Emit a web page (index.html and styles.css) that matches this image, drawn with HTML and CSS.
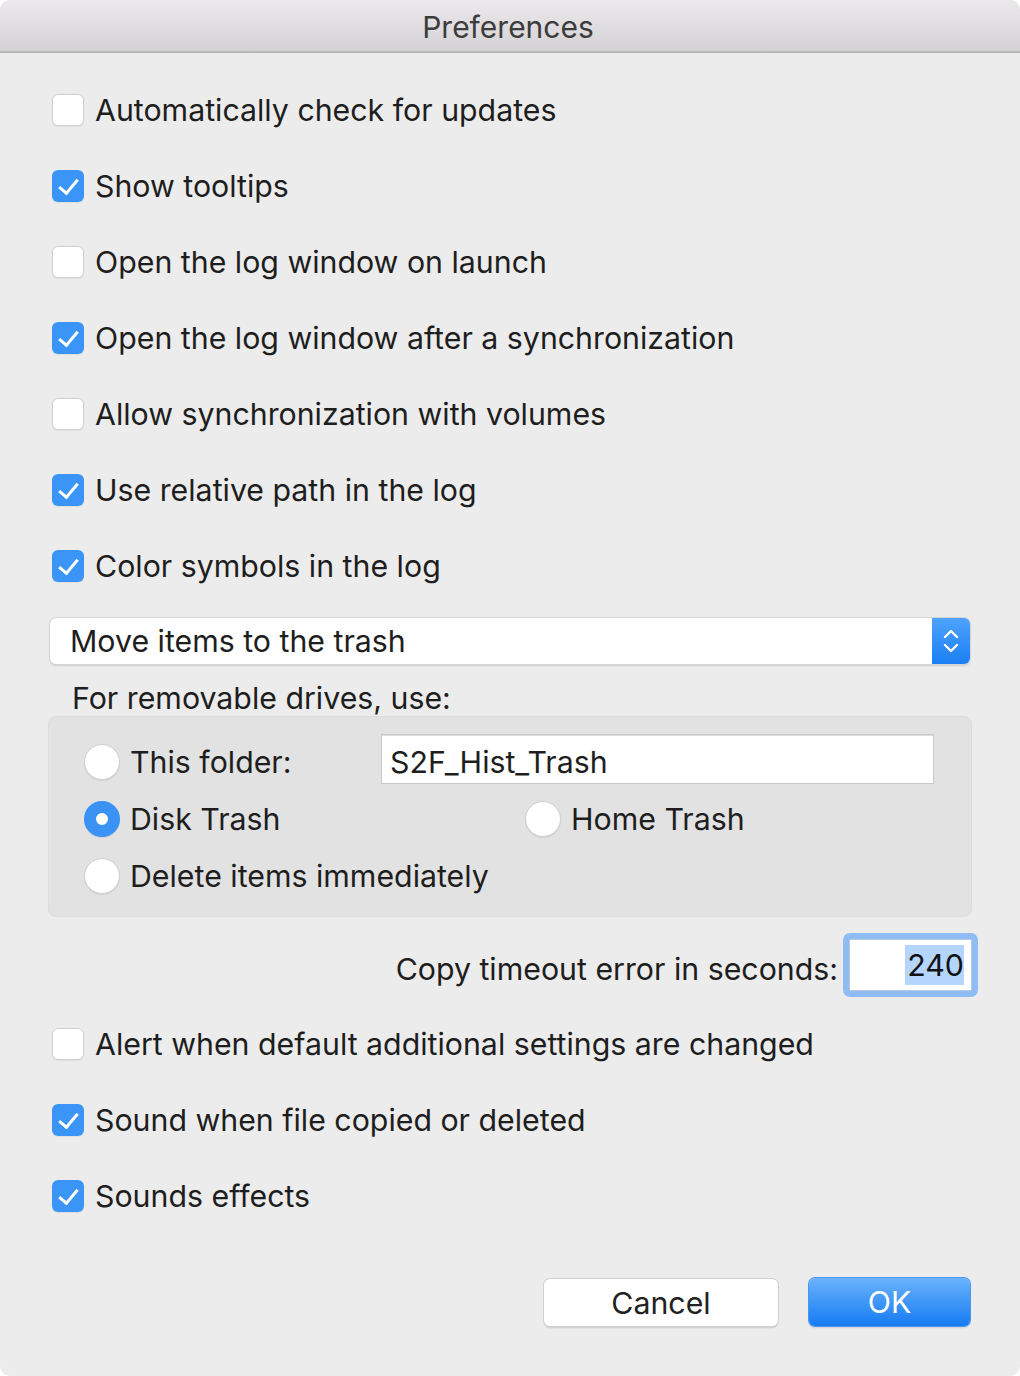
FILE: index.html
```html
<!DOCTYPE html>
<html lang="en">

<head>
    <meta charset="UTF-8">
    <title>Preferences</title>
    <link rel="stylesheet" href="styles.css">
</head>

<body>
    <div class="window">
        <div class="titlebar">Preferences</div>

        <div class="content">
            <div class="check-row"><span class="box"></span>Automatically check for updates</div>
            <div class="check-row"><span class="box on"></span>Show tooltips</div>
            <div class="check-row"><span class="box"></span>Open the log window on launch</div>
            <div class="check-row"><span class="box on"></span>Open the log window after a synchronization</div>
            <div class="check-row"><span class="box"></span>Allow synchronization with volumes</div>
            <div class="check-row"><span class="box on"></span>Use relative path in the log</div>
            <div class="check-row"><span class="box on"></span>Color symbols in the log</div>

            <div class="popup">
                <span class="popup-text">Move items to the trash</span>
                <span class="stepper">
                    <svg width="20" height="30" viewBox="0 0 20 30">
                        <path d="M4 11 L10 5 L16 11 M4 19 L10 25 L16 19" fill="none" stroke="#fff" stroke-width="2.4" stroke-linecap="round" stroke-linejoin="round"/>
                    </svg>
                </span>
            </div>

            <div class="group-label">For removable drives, use:</div>
            <div class="group">
                <div class="radio-row">
                    <div class="radio-item folder"><span class="radio"></span>This folder:</div>
                    <div class="field">S2F_Hist_Trash</div>
                </div>
                <div class="radio-row">
                    <div class="radio-item wide"><span class="radio on"></span>Disk Trash</div>
                    <div class="radio-item"><span class="radio"></span>Home Trash</div>
                </div>
                <div class="radio-row">
                    <div class="radio-item"><span class="radio"></span>Delete items immediately</div>
                </div>
            </div>

            <div class="timeout-row">
                <span class="timeout-label">Copy timeout error in seconds:</span>
                <div class="focus-ring">
                    <div class="num-field"><span class="sel">240</span></div>
                </div>
            </div>

            <div class="lower">
                <div class="check-row"><span class="box"></span>Alert when default additional settings are changed</div>
                <div class="check-row"><span class="box on"></span>Sound when file copied or deleted</div>
                <div class="check-row"><span class="box on"></span>Sounds effects</div>
            </div>

            <div class="buttons">
                <button class="btn">Cancel</button>
                <button class="btn primary">OK</button>
            </div>
        </div>
    </div>
</body>

</html>
```

FILE: styles.css
```css
html,
body {
    margin: 0;
    background: #ffffff;
}

.window {
    width: 1020px;
    height: 1376px;
    background: #ececec;
    border-radius: 10px;
    overflow: hidden;
    font-family: Inter, "Liberation Sans", sans-serif;
    font-size: 30.3px;
    color: #1e1e1e;
}

.titlebar {
    height: 51px;
    line-height: 54px;
    text-align: center;
    font-size: 30px;
    color: #3c3c3c;
    background: linear-gradient(#ebe9eb, #d4d2d4);
    border-bottom: 2px solid #b9b8b9;
    padding-right: 4px;
}

.content {
    padding: 19px 48px 0 48px;
}

.check-row {
    display: flex;
    align-items: center;
    height: 76px;
    padding-left: 4px;
}

.box {
    width: 32px;
    height: 32px;
    margin-right: 11px;
    box-sizing: border-box;
    border: 1px solid #cfcfcf;
    border-radius: 6px;
    background: #ffffff;
    box-shadow: 0 1px 1px rgba(0, 0, 0, 0.06);
    display: inline-flex;
    align-items: center;
    justify-content: center;
}

.box.on {
    border: none;
    background: #3a95f6;
}

.box.on::after {
    content: "";
    width: 8px;
    height: 16px;
    margin-top: -4px;
    border-right: 3px solid #ffffff;
    border-bottom: 3px solid #ffffff;
    transform: rotate(40deg);
}

.popup {
    margin-top: 14px;
    margin-left: 2px;
    height: 46px;
    width: 920px;
    display: flex;
    align-items: stretch;
    background: #ffffff;
    border-radius: 6px;
    box-shadow: 0 0 0 1px #d4d4d4, 0 2px 2px rgba(0, 0, 0, 0.12);
    overflow: hidden;
}

.popup-text {
    flex: 1;
    padding-left: 20px;
    line-height: 46px;
}

.stepper {
    width: 38px;
    background: linear-gradient(#4ea2fb, #1b7ff4);
    display: flex;
    align-items: center;
    justify-content: center;
}

.group-label {
    padding: 16px 0 0 24px;
    height: 36px;
    line-height: 36px;
}

.group {
    height: 201px;
    box-sizing: border-box;
    padding: 16px 0 0 35px;
    background: #e2e2e2;
    border-radius: 8px;
    border: 1px solid #dddddd;
}

.radio-row {
    display: flex;
    align-items: center;
    height: 57px;
}

.radio-item {
    display: flex;
    align-items: center;
}

.radio-item.folder {
    width: 297px;
}

.radio-item.wide {
    width: 441px;
}

.radio {
    width: 36px;
    height: 36px;
    box-sizing: border-box;
    margin-right: 10px;
    border-radius: 50%;
    background: #ffffff;
    border: 1px solid #cfcfcf;
    box-shadow: 0 1px 1px rgba(0, 0, 0, 0.08);
}

.radio.on {
    border: 12px solid #3a92f5;
}

.field {
    width: 553px;
    height: 50px;
    margin-top: -5px;
    box-sizing: border-box;
    padding: 5px 0 0 8px;
    line-height: 45px;
    background: #ffffff;
    border: 1px solid #c9c9c9;
    box-shadow: inset 0 1px 0 #dcdcdc;
}

.timeout-row {
    margin-top: 16px;
    height: 64px;
    display: flex;
    align-items: center;
    justify-content: flex-end;
    margin-right: -6px;
}

.timeout-label {
    margin-right: 5px;
    padding-top: 8px;
}

.focus-ring {
    width: 135px;
    height: 64px;
    box-sizing: border-box;
    padding: 6px;
    border-radius: 7px;
    background: #8fbdf3;
}

.num-field {
    height: 100%;
    box-sizing: border-box;
    background: #ffffff;
    border: 1px solid #b6c9e0;
    display: flex;
    align-items: center;
    justify-content: flex-end;
    padding-right: 7px;
}

.sel {
    background: #b4d6fd;
    padding: 2px 0 2px 2px;
    line-height: 36px;
    color: #111111;
}

.lower {
    margin-top: 9px;
}

.buttons {
    margin-top: 45px;
    display: flex;
    justify-content: flex-end;
    gap: 31px;
    padding-right: 2px;
}

.btn {
    font-family: inherit;
    font-size: 30.3px;
    height: 47px;
    width: 234px;
    border: none;
    border-radius: 6px;
    background: #ffffff;
    color: #222222;
    box-shadow: 0 0 0 1px #d0d0d0, 0 2px 2px rgba(0, 0, 0, 0.15);
    padding: 0;
}

.btn.primary {
    width: 161px;
    height: 48px;
    margin-top: -1px;
    color: #ffffff;
    background: linear-gradient(#6ab2fb, #167bf4);
    box-shadow: 0 0 0 1px #4a97f0, 0 2px 2px rgba(0, 0, 0, 0.12);
}
```
